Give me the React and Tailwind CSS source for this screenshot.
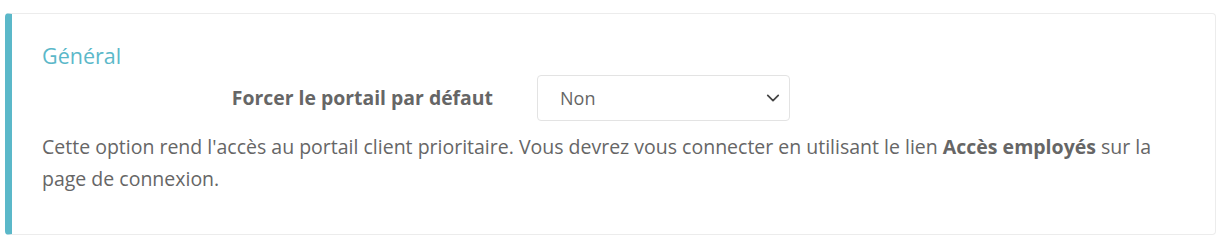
import React from 'react';

const App = () => {
  return (
    <div className="bg-white w-[1225px] h-[241px] pt-[13px] pl-[5px] pr-[9px]" style={{ fontFamily: '"Open Sans", sans-serif' }}>
      <div className="h-[222px] border border-[#ececec] border-l-[7px] border-l-[#5bb8c9] rounded-[4px] pl-[30px] pr-[30px] pt-[28px] text-[#666]">
        <h3 className="text-[21.5px] leading-[28px] text-[#5bb8c9]">Général</h3>

        {/* ligne du formulaire */}
        <div className="flex items-center mt-[5px]">
          <label className="w-[451px] text-right font-bold text-[19.4px] text-[#666]">Forcer le portail par défaut</label>
          <div className="ml-[44px] relative w-[253px] h-[46px] border border-[#e3e3e3] rounded-[4px] flex items-center pl-[22px] text-[18px] text-[#666]">
            Non
            <svg className="absolute right-[9px] top-1/2 -translate-y-1/2" width="14" height="14" viewBox="0 0 16 16" fill="none" stroke="#444" strokeWidth="2" strokeLinecap="round" strokeLinejoin="round">
              <path d="M2 5l6 6 6-6" />
            </svg>
          </div>
        </div>

        <p className="mt-[10px] text-[19.5px] leading-[32px] text-[#666]">
          Cette option rend l'accès au portail client prioritaire. Vous devrez vous connecter en utilisant le lien <b>Accès employés</b> sur la page de connexion.
        </p>
      </div>
    </div>
  );
};

export default App;
